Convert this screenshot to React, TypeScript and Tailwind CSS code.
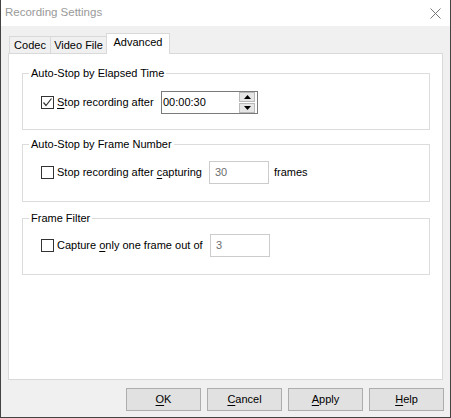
import React from "react";

const font = "font-['Liberation_Sans',Arial,sans-serif]";

function Checkbox({ checked }: { checked?: boolean }) {
  return (
    <span className="flex h-[13px] w-[13px] shrink-0 items-center justify-center border border-[#333333] bg-white">
      {checked && (
        <svg width="11" height="11" viewBox="0 0 11 11">
          <path d="M1.5 5.5L4 8.5L9.5 1.5" fill="none" stroke="#333333" strokeWidth="1.2" />
        </svg>
      )}
    </span>
  );
}

function Group({
  title,
  className,
  children,
}: {
  title: string;
  className: string;
  children: React.ReactNode;
}) {
  return (
    <fieldset className={`w-[408px] border border-[#dcdcdc] ${className}`}>
      <legend className="ml-[6px] px-[2px] leading-[14px]">{title}</legend>
      {children}
    </fieldset>
  );
}

function DialogButton({ mnemonic, rest }: { mnemonic: string; rest: string }) {
  return (
    <button className="h-[23px] w-[75px] border border-[#adadad] bg-[#e1e1e1] text-center leading-[21px]">
      <span className="underline underline-offset-2">{mnemonic}</span>
      {rest}
    </button>
  );
}

export default function App() {
  return (
    <div
      className={`flex h-[418px] w-[451px] flex-col border-x border-b border-[#434343] bg-[#f0f0f0] text-[11px] text-black ${font}`}
    >
      {/* Title bar */}
      <div className="flex h-[26px] shrink-0 items-center justify-between bg-white pl-[4px] pr-[9px]">
        <span className="text-[11.5px] text-[#999999]">Recording Settings</span>
        <svg width="11" height="11" viewBox="0 0 11 11">
          <path d="M0.5 0.5L10.5 10.5M10.5 0.5L0.5 10.5" stroke="#777777" strokeWidth="1" />
        </svg>
      </div>

      <div className="flex flex-col px-[7px]">
        {/* Tabs */}
        <div className="mt-[7px] flex h-[20px] items-end pl-[1px]">
          <div className="h-[17px] w-[41px] border-l border-t border-[#d9d9d9] text-center leading-[16px]">
            Codec
          </div>
          <div className="h-[17px] w-[56px] border-l border-t border-[#d9d9d9] text-center leading-[16px]">
            Video File
          </div>
          <div className="relative z-10 -mb-px h-[21px] w-[64px] border-x border-t border-[#d9d9d9] bg-white text-center leading-[17px]">
            Advanced
          </div>
        </div>

        {/* Tab page */}
        <div className="flex h-[327px] flex-col border border-[#d9d9d9] bg-white pl-[13px]">
          <Group title="Auto-Stop by Elapsed Time" className="mt-[12px] h-[64px]">
            <div className="ml-[18px] mt-[11px] flex h-[23px] items-center">
              <Checkbox checked />
              <span className="ml-[3px] w-[104px]">
                <span className="underline underline-offset-2">S</span>top recording after
              </span>
              <div className="flex h-[23px] w-[97px] items-center justify-between border border-[#7a7a7a] pl-[1px] pr-[2px]">
                <span>00:00:30</span>
                <div className="flex h-[21px] w-[16px] flex-col gap-px">
                  <div className="flex flex-1 items-center justify-center border border-[#b9b9b9] bg-[#e6e6e6]">
                    <svg width="7" height="4" viewBox="0 0 7 4">
                      <path d="M3.5 0L7 4H0Z" fill="#000000" />
                    </svg>
                  </div>
                  <div className="flex flex-1 items-center justify-center border border-[#b9b9b9] bg-[#e6e6e6]">
                    <svg width="7" height="4" viewBox="0 0 7 4">
                      <path d="M0 0H7L3.5 4Z" fill="#000000" />
                    </svg>
                  </div>
                </div>
              </div>
            </div>
          </Group>

          <Group title="Auto-Stop by Frame Number" className="mt-[7px] h-[65px]">
            <div className="ml-[18px] mt-[10px] flex h-[23px] items-center">
              <Checkbox />
              <span className="ml-[3px] w-[152px]">
                Stop recording after <span className="underline underline-offset-2">c</span>apturing
              </span>
              <div className="flex h-[23px] w-[60px] items-center border border-[#cccccc] pl-[5px] text-[#6d6d6d]">
                30
              </div>
              <span className="ml-[5px]">frames</span>
            </div>
          </Group>

          <Group title="Frame Filter" className="mt-[9px] h-[64px]">
            <div className="ml-[18px] mt-[9px] flex h-[23px] items-center">
              <Checkbox />
              <span className="ml-[3px] w-[153px]">
                Capture <span className="underline underline-offset-2">o</span>nly one frame out of
              </span>
              <div className="flex h-[23px] w-[60px] items-center border border-[#cccccc] pl-[5px] text-[#6d6d6d]">
                3
              </div>
            </div>
          </Group>
        </div>
      </div>

      {/* Dialog buttons */}
      <div className="mt-[8px] flex justify-end gap-[6px] pr-[6px]">
        <DialogButton mnemonic="O" rest="K" />
        <DialogButton mnemonic="C" rest="ancel" />
        <DialogButton mnemonic="A" rest="pply" />
        <DialogButton mnemonic="H" rest="elp" />
      </div>
    </div>
  );
}
